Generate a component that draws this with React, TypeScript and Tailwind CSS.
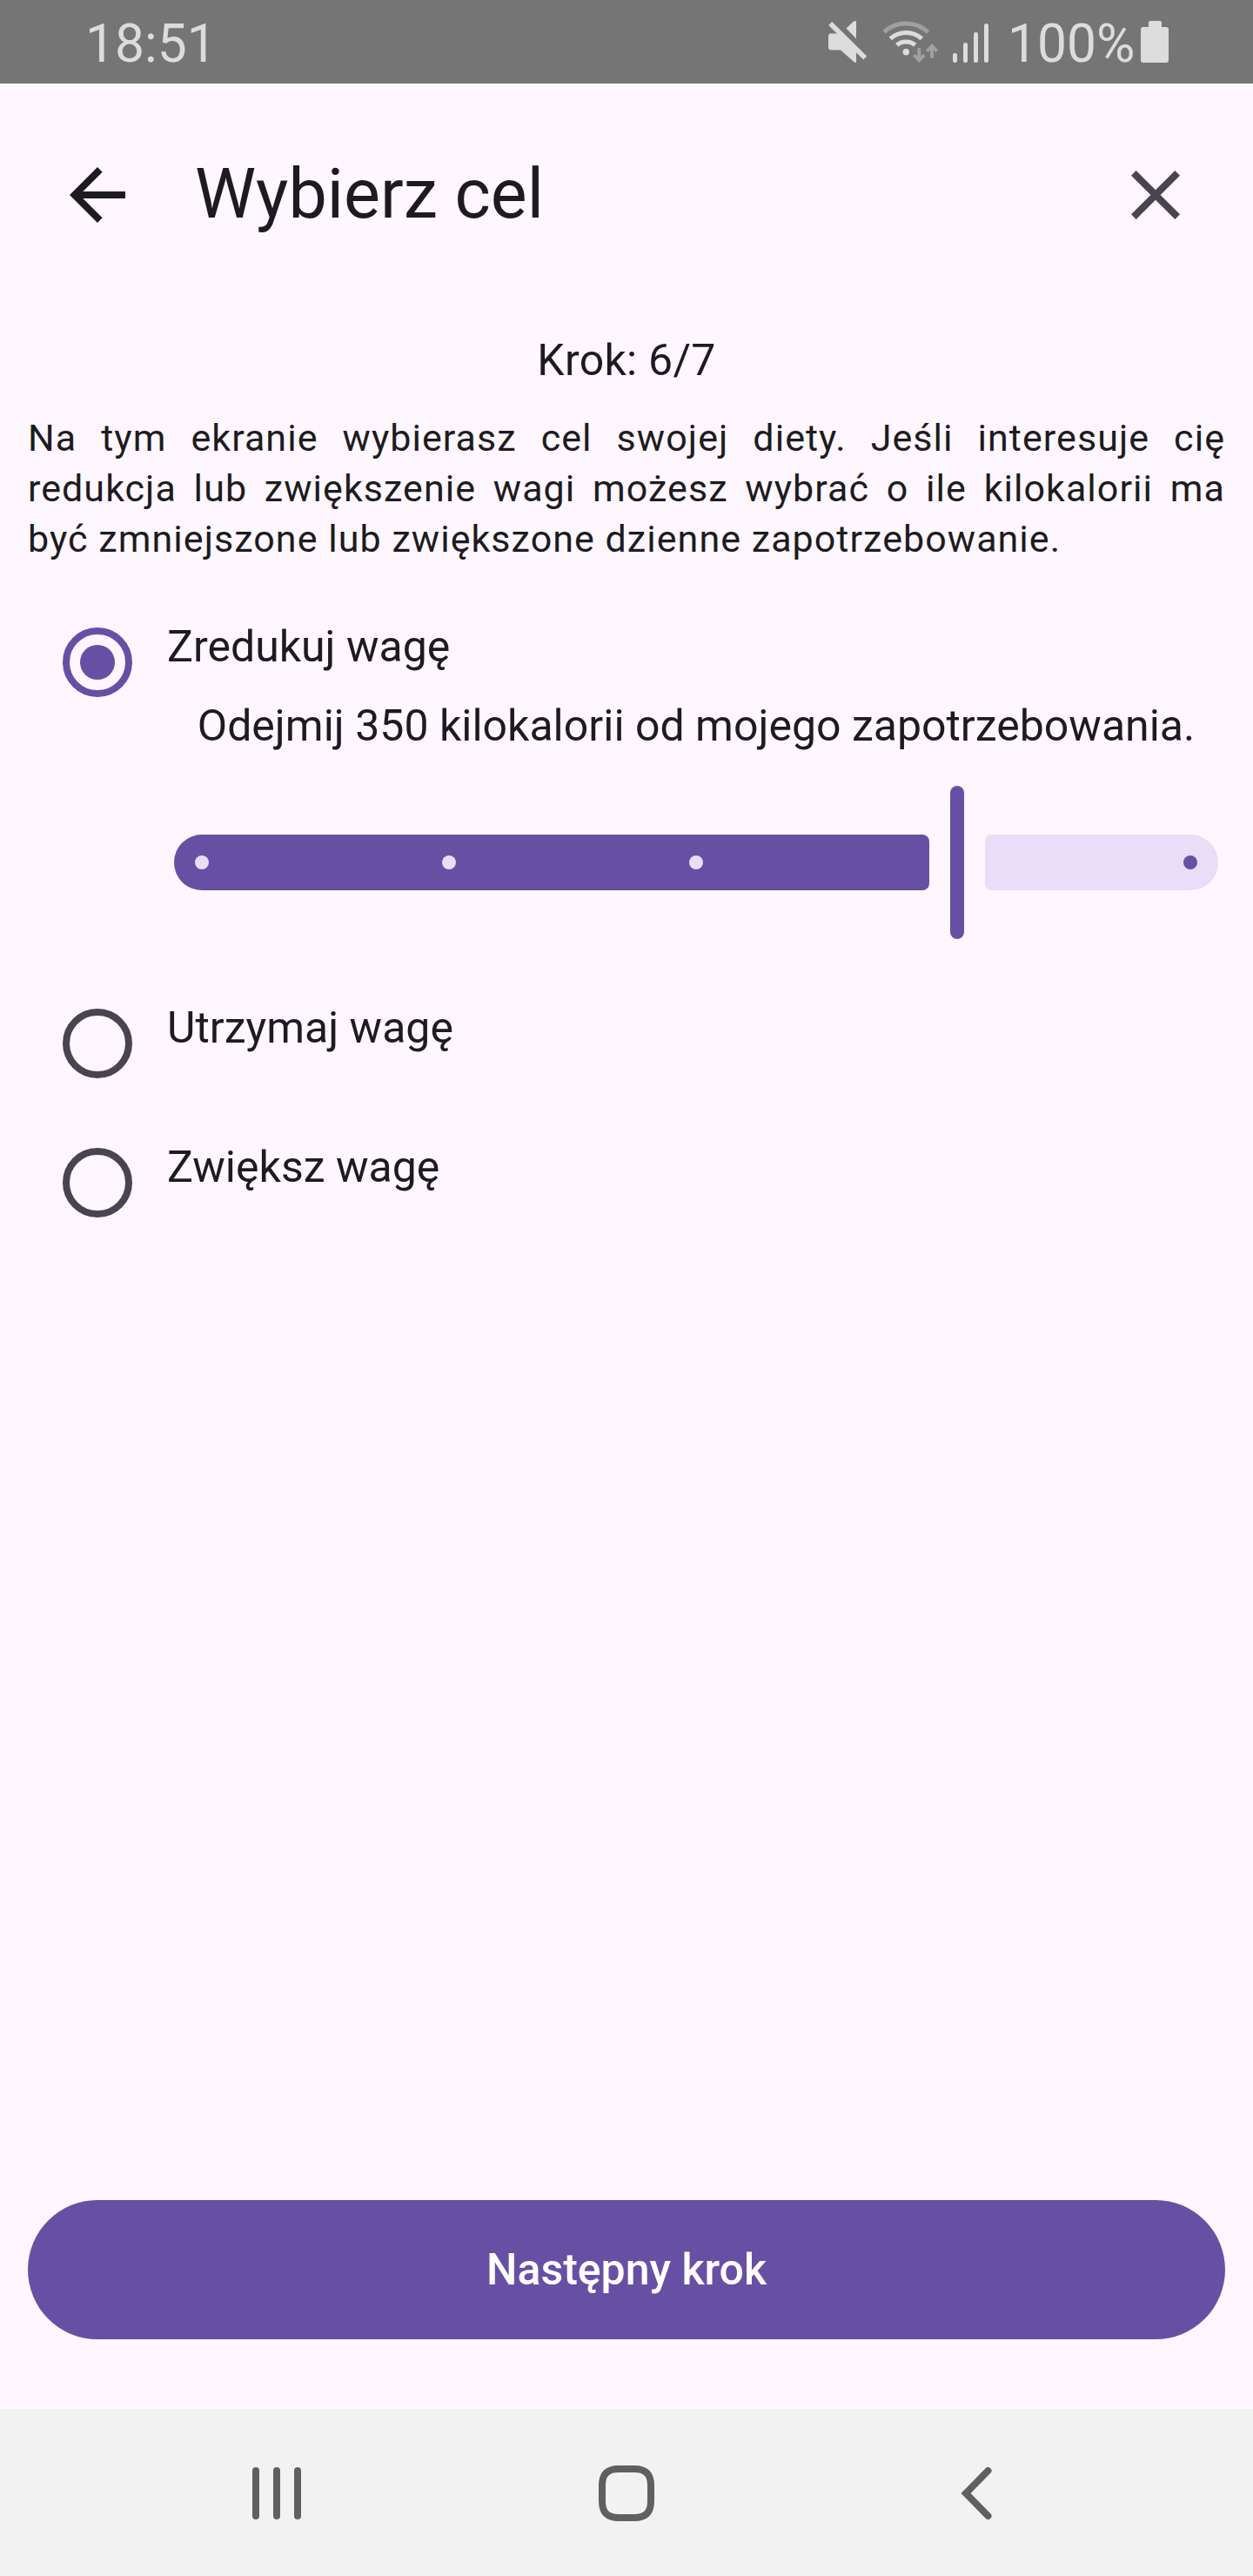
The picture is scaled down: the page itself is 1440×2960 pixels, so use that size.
import React from "react";

function MuteIcon() {
  return (
    <svg className="h-[50px] w-[46px]" viewBox="951 23 46 50" fill="#dcdcdc">
      <path d="M954.5 38.5H964L984 58V70.5Q984 73 981.5 71.3L966 57.5H955.5Q952 57.5 952 54V42Q952 38.5 954.5 38.5Z" />
      <path d="M972.5 32.5L980.5 25Q984 22.5 984 26V44.5Z" />
      <path d="M954.5 27L994.5 66.5" stroke="#757575" strokeWidth="8" transform="translate(2.5 -2.5)" />
      <path d="M954.2 27L994.2 66.5" stroke="#dcdcdc" strokeWidth="5.6" />
    </svg>
  );
}

function WifiIcon() {
  return (
    <svg className="h-[50px] w-[66px]" viewBox="1013 23 66 50" fill="none">
      <path d="M1016 36.8A37.5 37.5 0 0 1 1066.5 36.8" stroke="#a0a0a0" strokeWidth="5" />
      <path d="M1023.3 44.3A27 27 0 0 1 1059.3 44.3" stroke="#dcdcdc" strokeWidth="5" />
      <path d="M1030.7 51.8A16.5 16.5 0 0 1 1051.7 51.8" stroke="#dcdcdc" strokeWidth="5" />
      <circle cx="1041.3" cy="59.7" r="3.8" fill="#dcdcdc" />
      <path d="M1056.3 55V69M1050.5 63.2L1056.3 69.3L1062.2 63.2" stroke="#a0a0a0" strokeWidth="3.8" />
      <path d="M1071 67V53M1065.2 59L1071 52.8L1076.9 59" stroke="#a0a0a0" strokeWidth="3.8" />
    </svg>
  );
}

function StatusBar() {
  return (
    <div className="flex h-24 items-start bg-[#757575] pr-[97px] pl-[98px] text-[60.5px] leading-[60px] text-[#dcdcdc]">
      <span className="mt-[21px]">18:51</span>
      <div className="ml-auto flex items-start">
        <div className="mt-[23px] flex">
          <MuteIcon />
          <div className="ml-4">
            <WifiIcon />
          </div>
        </div>
        <div className="mt-[27px] ml-4 flex h-[45px] items-end gap-[7px]">
          <div className="h-[11px] w-[5px] rounded-full bg-current" />
          <div className="h-[23px] w-[5px] rounded-full bg-current" />
          <div className="h-[35px] w-[5px] rounded-full bg-current" />
          <div className="h-[45px] w-[5px] rounded-full bg-current" />
        </div>
        <span className="mt-[21px] ml-[22px] w-[153px] whitespace-nowrap">100%</span>
        <div className="mt-6 flex flex-col items-center">
          <div className="h-[7px] w-[15px] rounded-t-[2px] bg-current" />
          <div className="h-[41px] w-8 rounded-[3px] bg-current" />
        </div>
      </div>
    </div>
  );
}

function Header() {
  return (
    <header className="flex h-64 items-center px-16">
      <svg className="size-24" viewBox="0 0 24 24" fill="#1d1b20">
        <path d="M20 11H7.83l5.59-5.59L12 4l-8 8 8 8 1.41-1.41L7.83 13H20z" />
      </svg>
      <h1 className="-mt-[2px] ml-16 text-[79px] leading-[100px]">Wybierz cel</h1>
      <svg className="ml-auto size-24" viewBox="0 0 24 24" fill="#49454f">
        <path d="M19 6.41L17.59 5 12 10.59 6.41 5 5 6.41 10.59 12 5 17.59 6.41 19 12 13.41 17.59 19 19 17.59 13.41 12z" />
      </svg>
    </header>
  );
}

function Radio({ checked = false }: { checked?: boolean }) {
  return (
    <div
      className={
        checked
          ? "flex size-20 shrink-0 items-center justify-center rounded-full border-8 border-[#6750a4]"
          : "size-20 shrink-0 rounded-full border-8 border-[#49454f]"
      }
    >
      {checked && <div className="size-10 rounded-full bg-[#6750a4]" />}
    </div>
  );
}

function Option({ label, checked }: { label: string; checked?: boolean }) {
  return (
    <div className="flex h-20 items-start pl-[72px]">
      <Radio checked={checked} />
      <span className="-mt-[14px] ml-10 leading-[72px]">{label}</span>
    </div>
  );
}

function Slider() {
  return (
    <div className="mr-10 ml-[200px] flex h-44 items-center gap-6">
      <div className="flex h-16 w-[868px] items-center gap-[268px] rounded-l-[32px] rounded-r-lg bg-[#6750a4] pl-6">
        <div className="size-4 rounded-full bg-[#e8def8]" />
        <div className="size-4 rounded-full bg-[#e8def8]" />
        <div className="size-4 rounded-full bg-[#e8def8]" />
      </div>
      <div className="h-44 w-4 rounded-full bg-[#6750a4]" />
      <div className="flex h-16 w-[268px] items-center justify-end rounded-l-lg rounded-r-[32px] bg-[#e8def8] pr-6">
        <div className="size-4 rounded-full bg-[#6750a4]" />
      </div>
    </div>
  );
}

function NavBar() {
  return (
    <nav className="flex h-48 items-center justify-between bg-[#f2f2f2] pt-[2px] pr-[300px] pl-[290px]">
      <div className="flex gap-4">
        <div className="h-[60px] w-2 rounded-full bg-[#606060]" />
        <div className="h-[60px] w-2 rounded-full bg-[#606060]" />
        <div className="h-[60px] w-2 rounded-full bg-[#606060]" />
      </div>
      <svg className="mr-[10px] size-16" viewBox="0 0 64 64" fill="none" stroke="#606060" strokeWidth="8">
        <path d="M23 4H41C54 4 60 10 60 23V41C60 54 54 60 41 60H23C10 60 4 54 4 41V23C4 10 10 4 23 4Z" />
      </svg>
      <svg className="h-[60px] w-9" viewBox="0 0 36 60" fill="none" stroke="#606060" strokeWidth="8" strokeLinecap="round">
        <path d="M31.5 4L6 30L31.5 56" />
      </svg>
    </nav>
  );
}

export default function App() {
  return (
    <div className="flex h-[2960px] w-[1440px] flex-col bg-[#fef7ff] font-[Roboto,sans-serif] text-[50px] text-[#1d1b20]">
      <StatusBar />
      <Header />
      <main className="flex flex-1 flex-col">
        <p className="mt-[26px] text-center leading-[72px] tracking-[0.25px]">Krok: 6/7</p>
        <p className="mx-8 mt-6 text-justify text-[43px] leading-[58px] tracking-[1.05px]">
          Na tym ekranie wybierasz cel swojej diety. Jeśli interesuje cię redukcja lub zwiększenie wagi możesz wybrać o
          ile kilokalorii ma być zmniejszone lub zwiększone dzienne zapotrzebowanie.
        </p>
        <div className="mt-[73px]">
          <Option label="Zredukuj wagę" checked />
        </div>
        <p className="-mt-[3px] ml-[200px] w-[1200px] text-center leading-[72px] whitespace-nowrap">
          Odejmij 350 kilokalorii od mojego zapotrzebowania.
        </p>
        <div className="mt-[33px]">
          <Slider />
        </div>
        <div className="mt-20 flex flex-col gap-20">
          <Option label="Utrzymaj wagę" />
          <Option label="Zwiększ wagę" />
        </div>
        <button className="mx-8 mt-auto mb-20 h-40 rounded-full bg-[#6750a4] font-medium text-white">
          Następny krok
        </button>
      </main>
      <NavBar />
    </div>
  );
}
